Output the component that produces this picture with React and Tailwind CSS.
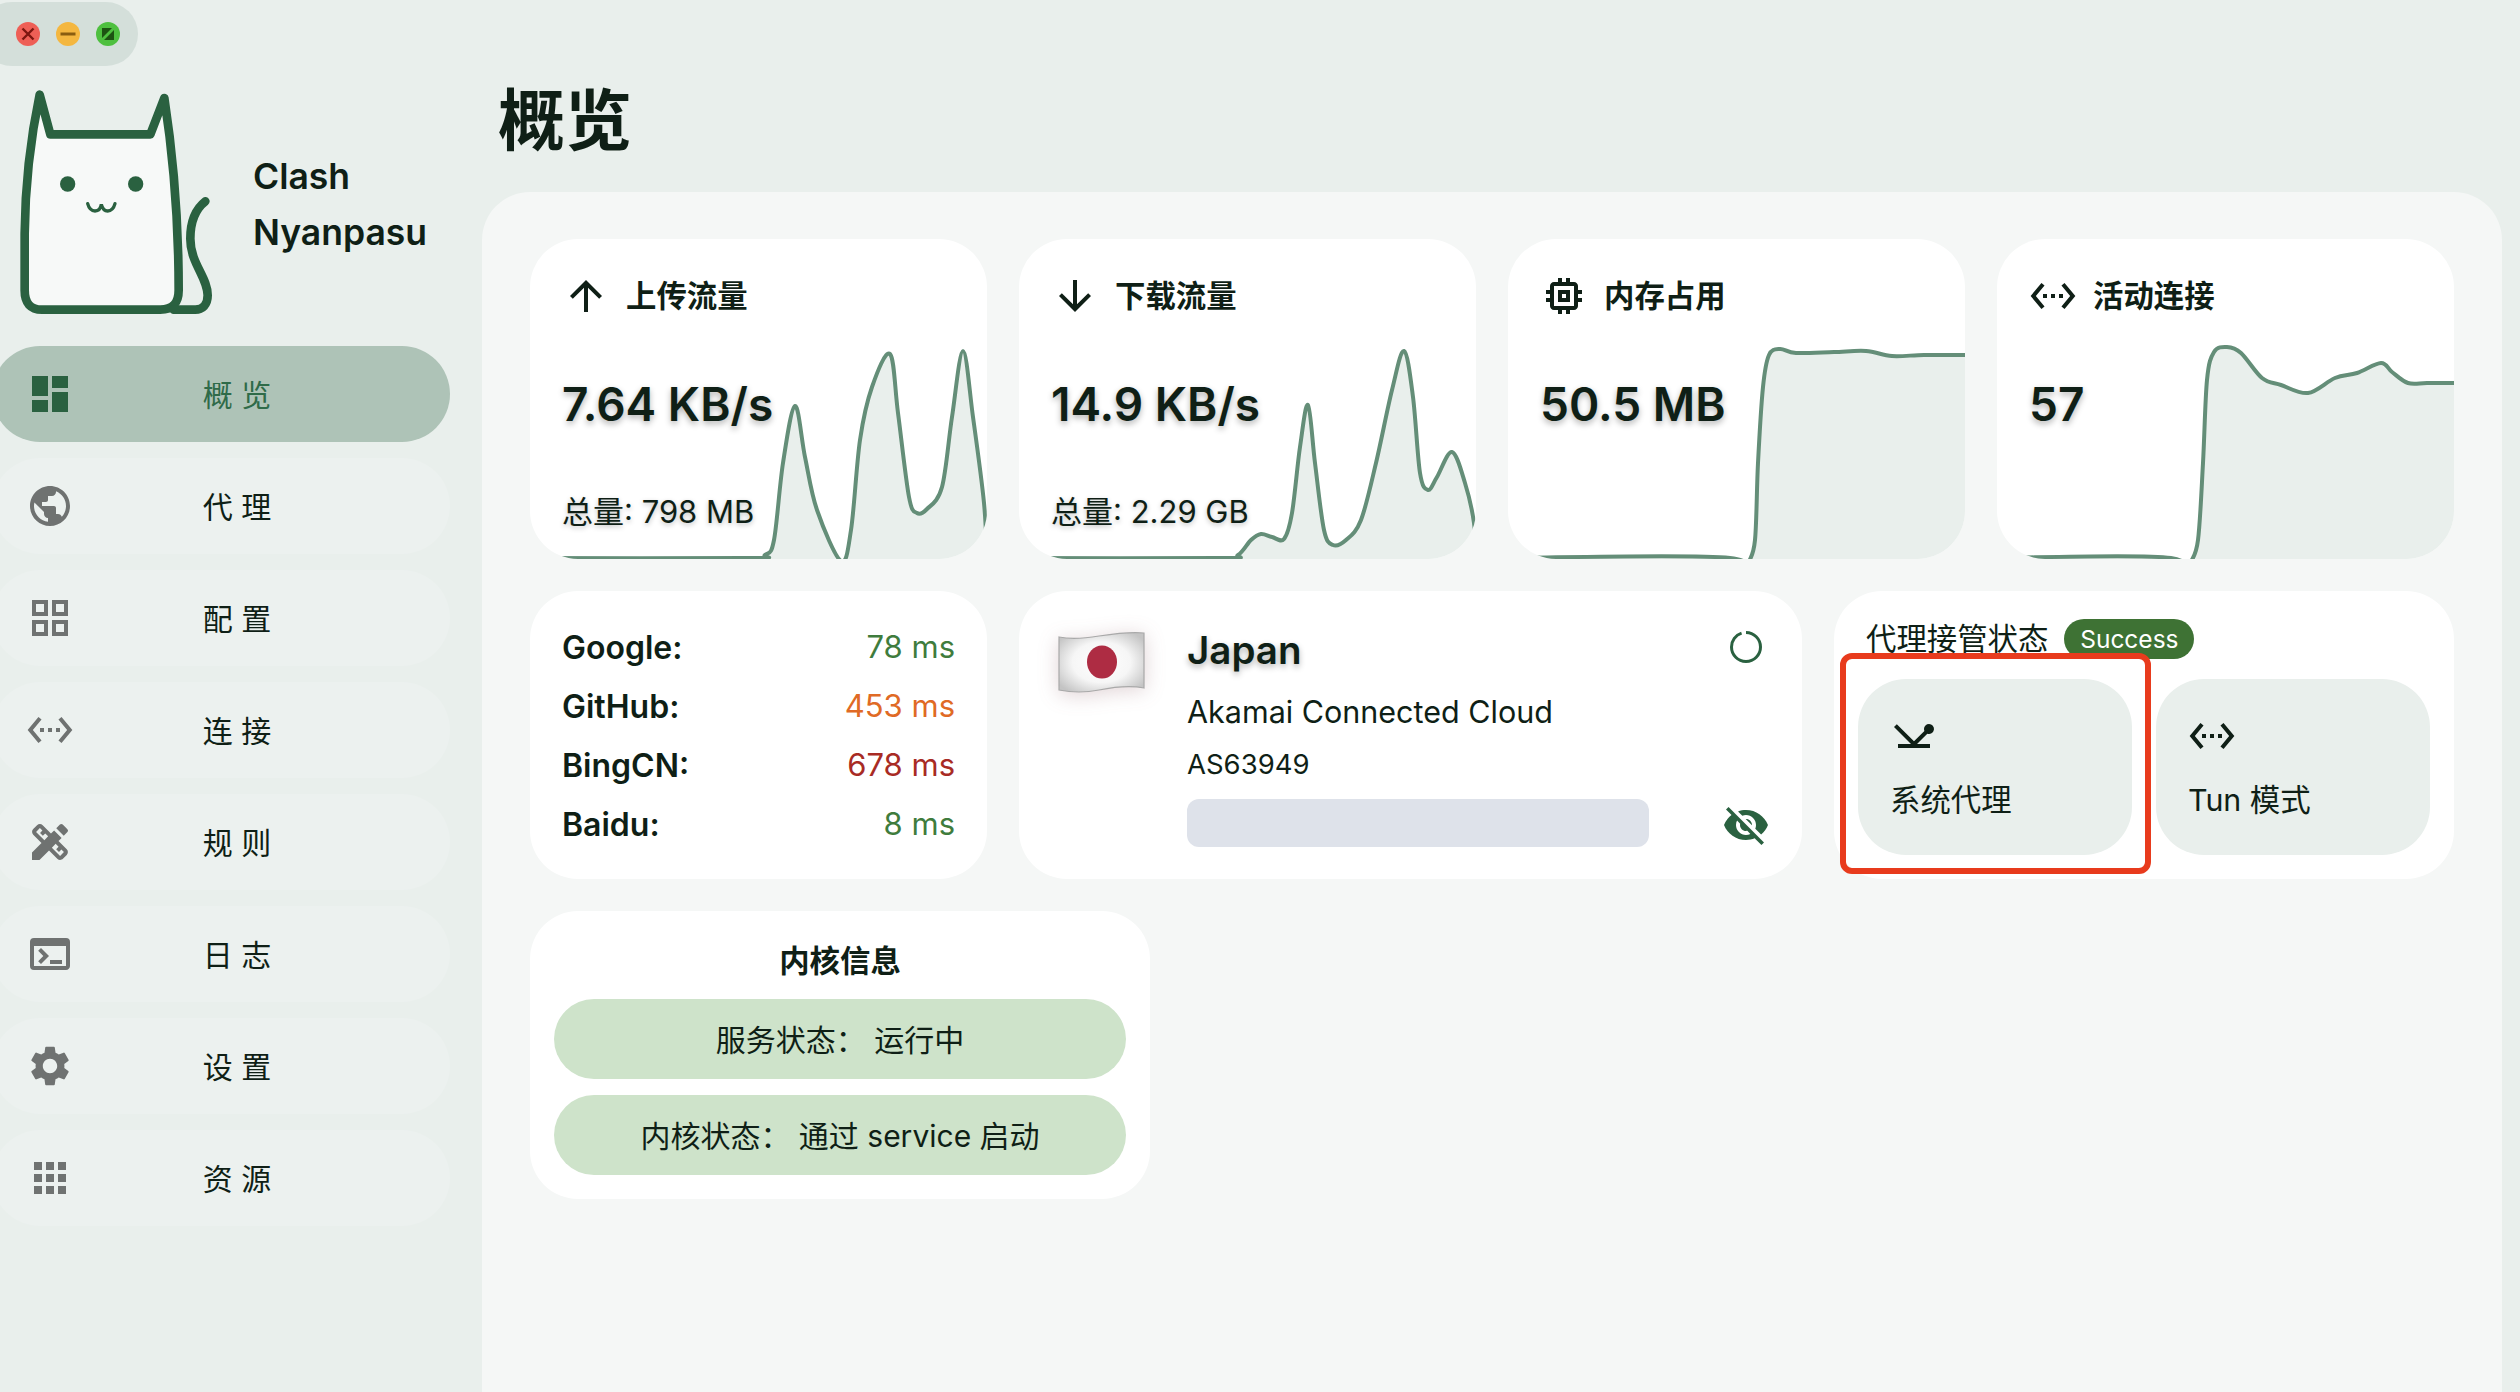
import {
  MdDashboard,
  MdPublic,
  MdOutlineGridView,
  MdSettingsEthernet,
  MdDesignServices,
  MdTerminal,
  MdSettings,
  MdApps,
  MdArrowUpward,
  MdArrowDownward,
  MdMemory,
  MdVisibilityOff,
  MdNetworkPing,
} from 'react-icons/md'

const navItems = [
  { label: '概 览', icon: MdDashboard, active: true },
  { label: '代 理', icon: MdPublic },
  { label: '配 置', icon: MdOutlineGridView },
  { label: '连 接', icon: MdSettingsEthernet },
  { label: '规 则', icon: MdDesignServices },
  { label: '日 志', icon: MdTerminal },
  { label: '设 置', icon: MdSettings },
  { label: '资 源', icon: MdApps },
]

// chart points are in card pixels (card is 457x320)
const charts = {
  up: [[0, 319], [217, 319], [235, 316], [244, 301], [253, 224], [265, 167], [275, 218], [287, 271], [311, 322], [321, 291], [330, 201], [342, 148], [360, 115], [368, 174], [379, 258], [387, 274], [397, 270], [412, 248], [422, 178], [433, 112], [443, 178], [454, 264], [457, 322]],
  down: [[0, 319], [201, 319], [219, 316], [232, 301], [242, 295], [253, 298], [265, 300], [273, 274], [281, 208], [289, 166], [296, 224], [305, 291], [314, 306], [327, 301], [342, 281], [357, 224], [373, 151], [385, 112], [394, 158], [401, 234], [409, 251], [418, 238], [433, 213], [446, 244], [455, 284], [457, 322]],
  memory: [[0, 319], [222, 319], [232, 345], [240, 325], [247, 301], [250, 224], [255, 148], [261, 116], [272, 110], [288, 114], [326, 113], [358, 112], [384, 117], [416, 116], [457, 116]],
  conn: [[0, 319], [174, 319], [184, 345], [193, 325], [201, 301], [206, 224], [210, 141], [217, 113], [230, 108], [244, 114], [265, 139], [284, 146], [311, 154], [338, 139], [360, 134], [384, 124], [395, 133], [411, 144], [430, 144], [457, 144]],
}

function smooth(points) {
  let d = `M${points[0][0]} ${points[0][1]}`
  for (let i = 0; i < points.length - 1; i++) {
    const p0 = points[i - 1] || points[i]
    const p1 = points[i]
    const p2 = points[i + 1]
    const p3 = points[i + 2] || p2
    const c1x = p1[0] + (p2[0] - p0[0]) / 6
    const c1y = p1[1] + (p2[1] - p0[1]) / 6
    const c2x = p2[0] - (p3[0] - p1[0]) / 6
    const c2y = p2[1] - (p3[1] - p1[1]) / 6
    d += ` C${c1x} ${c1y} ${c2x} ${c2y} ${p2[0]} ${p2[1]}`
  }
  return d
}

function Chart({ points }) {
  const line = smooth(points)
  const last = points[points.length - 1]
  return (
    <svg className="absolute inset-0 w-full h-full" viewBox="0 0 457 320" preserveAspectRatio="none">
      <path d={`${line} L${last[0]} 350 L0 350 Z`} fill="#e9efec" />
      <path d={line} fill="none" stroke="#648e78" strokeWidth="4" />
    </svg>
  )
}

function CatLogo() {
  return (
    <svg className="w-[200px] h-[230px] shrink-0" viewBox="50 260 600 690" fill="none" stroke="#2a6140">
      <path
        d="M73 870 L73 700 C74 600 85 440 118 283 L150 402 L450 402 L492 293 C510 410 535 620 535 870 Q535 928 480 928 L125 928 Q73 928 73 870 Z"
        fill="#f7f9f8"
        strokeWidth="26"
        strokeLinejoin="round"
      />
      <path
        d="M615 603 C578 632 570 680 570 715 C570 790 622 830 622 885 C622 915 605 928 585 928 L520 928"
        strokeWidth="26"
        strokeLinecap="round"
      />
      <circle cx="202" cy="551" r="23" fill="#2a6140" stroke="none" />
      <circle cx="406" cy="551" r="23" fill="#2a6140" stroke="none" />
      <path d="M262 610 Q268 632 284 632 Q300 632 303 612 Q308 632 322 632 Q338 632 344 610" strokeWidth="10" strokeLinecap="round" />
    </svg>
  )
}

function TrafficLights() {
  return (
    <div className="mt-[2px] -ml-5 w-[158px] h-16 pl-[36px] rounded-[32px] bg-[#d4dfda] flex items-center gap-4 shrink-0">
      <svg className="w-6 h-6" viewBox="0 0 24 24">
        <circle cx="12" cy="12" r="12" fill="#ee5f56" />
        <path d="M6.5 6.5l11 11M17.5 6.5l-11 11" stroke="#7d1610" strokeWidth="2.4" />
      </svg>
      <svg className="w-6 h-6" viewBox="0 0 24 24">
        <circle cx="12" cy="12" r="12" fill="#f4b740" />
        <path d="M4.5 12h15" stroke="#8a5d10" strokeWidth="3" />
      </svg>
      <svg className="w-6 h-6" viewBox="0 0 24 24">
        <circle cx="12" cy="12" r="12" fill="#4ec03f" />
        <path d="M6 6h10L6 16zM18 8v10H8z" fill="#1d5312" />
      </svg>
    </div>
  )
}

function Sidebar() {
  return (
    <aside className="w-[480px] shrink-0 flex flex-col overflow-hidden">
      <TrafficLights />
      <div className="mt-[21px] ml-[17px] flex items-center gap-9">
        <CatLogo />
        <div className="pt-[6px] text-[35.5px] leading-[56px] font-semibold text-[#0f1f16]">
          <div>Clash</div>
          <div>Nyanpasu</div>
        </div>
      </div>
      <nav className="mt-[29px] flex flex-col gap-4">
        {navItems.map((item) => {
          const Icon = item.icon
          return (
            <div
              key={item.label}
              className={`-ml-2 w-[458px] h-24 rounded-[48px] pl-[34px] pr-[50px] flex items-center ${
                item.active ? 'bg-[#aec3b7]' : 'bg-[#ecf1ef]'
              }`}
            >
              <Icon className={`w-12 h-12 shrink-0 ${item.active ? 'text-[#2a6140]' : 'text-[#6f7271]'}`} />
              <span className={`flex-1 pt-[3px] text-center text-[30px] ${item.active ? 'text-[#2f6b49]' : 'text-[#0f1f16]'}`}>
                {item.label}
              </span>
            </div>
          )
        })}
      </nav>
    </aside>
  )
}

function StatCard({ icon: Icon, title, value, total, points }) {
  return (
    <div className="col-span-3 relative overflow-hidden rounded-[48px] bg-white">
      <Chart points={points} />
      <div className="relative px-8 pt-[33px]">
        <div className="flex items-center gap-4 h-12">
          <Icon className="w-12 h-12 shrink-0 text-[#0f1f16]" />
          <span className="pt-[2px] text-[30.4px] font-semibold text-[#0f1f16]">{title}</span>
        </div>
        <div className="mt-[56px] text-[46px] leading-[56px] font-semibold text-[#0f1f16] [text-shadow:0_3px_6px_rgba(0,0,0,0.3)]">
          {value}
        </div>
        {total && (
          <div className="mt-[60px] text-[31px] leading-10 text-[#0f1f16] [text-shadow:0_2px_5px_rgba(0,0,0,0.25)]">
            {total}
          </div>
        )}
      </div>
    </div>
  )
}

function PingCard() {
  const rows = [
    ['Google:', '78 ms', 'text-[#3f7c3d]'],
    ['GitHub:', '453 ms', 'text-[#e06a25]'],
    ['BingCN:', '678 ms', 'text-[#a82b24]'],
    ['Baidu:', '8 ms', 'text-[#3f7c3d]'],
  ]
  return (
    <div className="col-span-3 rounded-[48px] bg-white px-8 pt-[2px] flex flex-col justify-center">
      {rows.map(([name, ms, color]) => (
        <div key={name} className="h-[59px] flex items-center justify-between">
          <span className="text-[32px] font-semibold text-[#0f1f16]">{name}</span>
          <span className={`text-[31px] ${color}`}>{ms}</span>
        </div>
      ))}
    </div>
  )
}

function JapanFlag() {
  return (
    <svg className="w-[85px] h-[62px] shrink-0 overflow-visible drop-shadow-[0_3px_10px_rgba(120,60,70,0.22)]" viewBox="0 0 85 62">
      <defs>
        <radialGradient id="flagShade" cx="0.5" cy="0.5" r="0.62">
          <stop offset="0" stopColor="#ffffff" />
          <stop offset="0.55" stopColor="#f6f6f6" />
          <stop offset="1" stopColor="#c4c4c4" />
        </radialGradient>
      </defs>
      <path d="M0 5 C10 7 22 7 40 4 C60 1 75 0 85 1 L85 56 C70 53 55 55 40 58 C25 61 10 60 0 58 Z" fill="url(#flagShade)" stroke="#a9a9a9" strokeWidth="1.2" />
      <ellipse cx="43" cy="30" rx="15" ry="16.5" fill="#ae2c43" />
    </svg>
  )
}

function IpCard() {
  return (
    <div className="col-span-5 rounded-[48px] bg-white pl-10 pr-8 flex">
      <div className="pt-[41px]">
        <JapanFlag />
      </div>
      <div className="ml-[43px] flex-1 pt-[31px] text-[#0f1f16]">
        <div className="text-[38.5px] leading-[56px] font-semibold [text-shadow:0_3px_6px_rgba(0,0,0,0.3)]">Japan</div>
        <div className="mt-3 text-[30.5px] leading-[44px]">Akamai Connected Cloud</div>
        <div className="mt-3 text-[27.5px] leading-9">AS63949</div>
        <div className="mt-[17px] w-[462px] h-12 rounded-xl bg-[#dee2ea]" />
      </div>
      <div className="w-12 pt-10 pb-[30px] flex flex-col items-center justify-between text-[#2a6140]">
        <svg className="w-8 h-8" viewBox="0 0 32 32" fill="none">
          <circle cx="16" cy="16" r="14.5" stroke="currentColor" strokeWidth="3" strokeDasharray="86 5" transform="rotate(-90 16 16)" />
        </svg>
        <MdVisibilityOff className="w-12 h-12" />
      </div>
    </div>
  )
}

function ProxyCard() {
  return (
    <div className="col-span-4 rounded-[48px] bg-white px-6 pt-7 pb-6 flex flex-col">
      <div className="pl-2 h-10 flex items-center gap-4">
        <span className="pt-[2px] text-[30.4px] text-[#0f1f16]">代理接管状态</span>
        <span className="h-10 w-[130px] rounded-full bg-[#3e7234] text-white text-[24.5px] flex items-center justify-center">
          Success
        </span>
      </div>
      <div className="mt-5 grid grid-cols-2 gap-6 h-[176px]">
        <div className="relative rounded-[48px] bg-[#e9efec] px-8 pt-[33px] text-[#0f1f16]">
          <MdNetworkPing className="w-12 h-12" />
          <div className="mt-5 text-[30.4px] leading-10">系统代理</div>
          <div className="absolute -left-[18px] -top-[26px] -right-[19px] -bottom-[19px] rounded-xl border-[6px] border-[#e83b1d]" />
        </div>
        <div className="rounded-[48px] bg-[#e9efec] px-8 pt-[33px] text-[#0f1f16]">
          <MdSettingsEthernet className="w-12 h-12" />
          <div className="mt-5 text-[30.4px] leading-10">Tun 模式</div>
        </div>
      </div>
    </div>
  )
}

function KernelCard() {
  return (
    <div className="col-span-4 rounded-[48px] bg-white px-6 pb-6 flex flex-col justify-end text-[#0f1f16]">
      <div className="text-center text-[30.4px] font-semibold leading-10 mb-[18px]">内核信息</div>
      <div className="flex flex-col gap-4">
        <div className="h-20 pt-[3px] rounded-[40px] bg-[#cee3ca] flex items-center justify-center text-[30px]">服务状态： 运行中</div>
        <div className="h-20 pt-[3px] rounded-[40px] bg-[#cee3ca] flex items-center justify-center text-[30px]">内核状态： 通过 service 启动</div>
      </div>
    </div>
  )
}

export default function App() {
  return (
    <div className="w-[2520px] h-[1392px] overflow-hidden flex bg-[#e9efec] [font-family:Inter,'Noto_Sans_CJK_SC',sans-serif]">
      <Sidebar />
      <main className="flex-1 min-w-0 flex flex-col pl-[2px] pr-[18px]">
        <div className="h-[192px] shrink-0 pt-[50px] pl-4 flex items-center">
          <h1 className="text-[67px] font-bold text-[#0f1f16]">概览</h1>
        </div>
        <div className="flex-1 rounded-t-[48px] bg-[#f5f7f6] px-12 pt-[47px]">
          <div className="grid grid-cols-12 gap-8 grid-rows-[320px_288px_288px]">
            <StatCard icon={MdArrowUpward} title="上传流量" value="7.64 KB/s" total="总量: 798 MB" points={charts.up} />
            <StatCard icon={MdArrowDownward} title="下载流量" value="14.9 KB/s" total="总量: 2.29 GB" points={charts.down} />
            <StatCard icon={MdMemory} title="内存占用" value="50.5 MB" points={charts.memory} />
            <StatCard icon={MdSettingsEthernet} title="活动连接" value="57" points={charts.conn} />
            <PingCard />
            <IpCard />
            <ProxyCard />
            <KernelCard />
          </div>
        </div>
      </main>
    </div>
  )
}
